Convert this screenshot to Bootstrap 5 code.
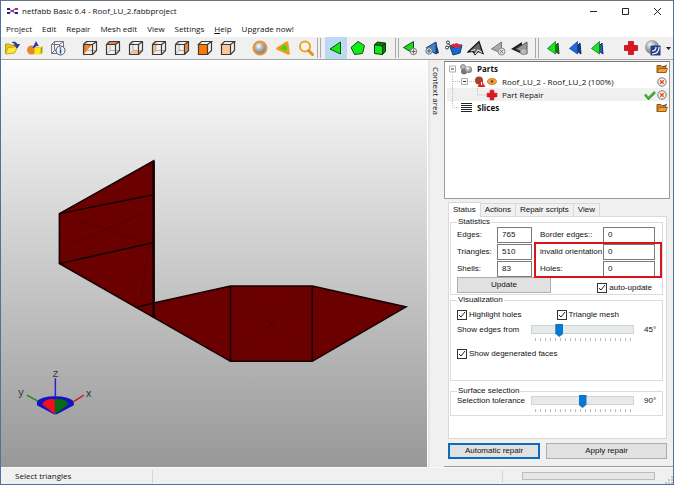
<!DOCTYPE html>
<html lang="en">
<head>
<meta charset="utf-8">
<meta name="viewport" content="width=device-width, initial-scale=1">
<title>netfabb Basic 6.4 - Roof_LU_2.fabbproject</title>
<link href="https://cdn.jsdelivr.net/npm/bootstrap@5.3.0/dist/css/bootstrap.min.css" rel="stylesheet">
<style>
  :root { --ui: "Open Sans", "Noto Sans", sans-serif; --form: "Liberation Sans", Arial, sans-serif; }
  body { font: 8px/10px var(--ui); color: #111; background: #f0f0f0; }
  button, input { font: inherit; color: inherit; }
  svg { display: block; }
  .app-window { border: 1px solid #4c72a4; border-top-color: #68727e; }
  .title-bar { height: 20px; padding-left: 6px; }
  .title-bar h1 { font-size: 8px; line-height: 10px; font-weight: 400; }
  .win-btn { width: 32px; height: 18px; }
  .flat-btn { border: 0; background: none; padding: 0; display: flex; align-items: center; justify-content: center; }
  .menu-bar { height: 16px; padding-left: 5px; gap: 10px; }
  .menu-bar a { color: #111; text-decoration: none; }
  .tool-bar { height: 23px; background: #f0f0f0; border-bottom: 1px solid #a5a5a5; }
  .tool-group { display: flex; gap: 1px; }
  .tool-group + .tool-group { margin-left: 10px; }
  .tool-btn { width: 22px; height: 22px; }
  .tool-btn.active { background: #b9dbf1; }
  .split { width: 4px; height: 20px; border: solid #a8a8a8; border-width: 0 1px; }
  .viewport { background: linear-gradient(#fdfdfd, #989898); }
  .context-strip { width: 17px; border-left: 1px solid #fff; background: #f0f0f0; box-shadow: inset 2px 0 #e6e6e6; writing-mode: vertical-rl; padding-top: 7px; }
  .side-panel { width: 229px; padding: 1px 3px 7px 0; border-bottom: 1px solid #9a9a9a; }
  .tree { height: 138px; border: 1px solid #9b9b9b; border-top-color: #777; background: #fff; margin-bottom: 3px; }
  .tree-row { height: 13px; padding: 0 1px 0 4px; }
  .tree-row.selected { background: linear-gradient(#f0f0f0, #f0f0f0) 2px 0 no-repeat; }
  .form-area { font-family: var(--form); padding: 0 3px 0 4px; }
  .tab-btn { height: 13px; padding: 0 4px; border: 1px solid #d9d9d9; border-bottom: 0; border-left-width: 0; background: #f0f0f0; line-height: 12px; }
  .tab-btn.active { height: 15px; background: #fff; margin-bottom: -1px; border-left-width: 1px; position: relative; }
  .tab-page { border: 1px solid #d9d9d9; background: #fff; padding: 0 3px 0 1px; }
  .group { border: 1px solid #dcdcdc; padding: 0 6px; margin: 0; }
  .group legend { float: none; width: auto; font-size: 8px; line-height: 10px; margin: 0; padding: 0 1px; }
  .stats { padding-bottom: 1px; }
  .visuals { padding-bottom: 21px; }
  .surfaces { margin-top: 5px; padding-bottom: 3px; }
  .stat-grid { display: grid; grid-template-columns: 40px 35px 71px 52px; row-gap: 1px; align-items: center; }
  .stat-grid label:nth-of-type(even) { padding-left: 8px; white-space: nowrap; }
  .stat-grid input { height: 16px; width: 100%; min-width: 0; border: 1px solid #7a7a7a; border-radius: 0; padding: 0 4px 2px; background: #fff; }
  .push-btn { height: 16px; border: 1px solid #adadad; background: #e1e1e1; padding: 0; line-height: 12px; }
  .push-btn.default { border: 2px solid #0a6cbd; }
  .check-row { padding: 5px 0; }
  .tick { appearance: none; width: 10px; height: 10px; margin: 0; border: 1px solid #333; background: #fff; flex: none; }
  .tick:checked { background: #fff url("data:image/svg+xml,%3Csvg xmlns='http://www.w3.org/2000/svg' viewBox='0 0 8 8'%3E%3Cpath d='M1 4l2 2 4-5' fill='none' stroke='%23222'/%3E%3C/svg%3E") center / 8px 8px no-repeat; }
  .tick-label { display: flex; align-items: center; gap: 2px; }
  .slider-box { width: 103px; }
  .slider { appearance: none; display: block; width: 100%; height: 9px; margin: 0; background: none; }
  .slider::-webkit-slider-runnable-track { height: 9px; background: #e7eaea; border: 1px solid #d0d3d3; }
  .slider::-webkit-slider-thumb { appearance: none; width: 8px; height: 13px; margin-top: -2px; background: #0a78d0; clip-path: polygon(0 0, 100% 0, 100% 75%, 50% 100%, 0 75%); }
  .ticks { height: 3px; margin: 4px 3px 0 4px; background: repeating-linear-gradient(90deg, #bbb 0 1px, transparent 1px 5px); }
  .value { width: 12px; margin-left: 10px; white-space: nowrap; }
  .callout { position: absolute; left: 83px; right: 0; top: 15px; height: 36px; border: 2px solid #d9151c; pointer-events: none; }
  .status-bar { height: 17px; padding-left: 14px; border-top: 1px solid #fafafa; }
  .status-cell { border-left: 1px solid #d5d5d5; height: 13px; }
  .load-track { width: 133px; height: 8px; border: 1px solid #bcbcbc; background: #e6e6e6; border-radius: 0; }
</style>
<script src="https://cdn.jsdelivr.net/npm/bootstrap@5.3.0/dist/js/bootstrap.bundle.min.js"></script>
</head>
<body>
<svg width="0" height="0" class="position-absolute" aria-hidden="true">
  <defs>
    <radialGradient id="ball" cx=".4" cy=".35" r=".65"><stop offset="0" stop-color="#fff"/><stop offset=".5" stop-color="#aaa"/><stop offset="1" stop-color="#777"/></radialGradient>
    <symbol id="cube" viewBox="0 0 16 16"><path d="M5 2v8.500h9M5 10.500l-3 3" fill="none" stroke="#b9aea4"/><path d="M1.500 4.500h9v10h-9zM1.500 4.500l3-3h10l-4 3M14.500 1.500v9l-4 4" fill="none" stroke="#3d3a38" stroke-width="1.200" stroke-linejoin="round"/></symbol>
    <symbol id="cross" viewBox="0 0 16 16"><path d="M5.500 1.500h5v4h4v5h-4v4h-5v-4h-4v-5h4z" fill="#e0141c" stroke="#b01018" stroke-width=".8"/></symbol>
    <symbol id="folder" viewBox="0 0 12 10"><path d="M1 1.500h4l1 1h4v6H1z" fill="#d98324" stroke="#8a5518"/><path d="M1 8.500l2-4h8.500l-2 4z" fill="#f4a13a" stroke="#8a5518" stroke-width=".8"/><path d="M7 3l4-2" stroke="#555"/></symbol>
    <symbol id="remove" viewBox="0 0 10 10"><circle cx="5" cy="5" r="4.200" fill="#fdf3ee" stroke="#555" stroke-width=".8"/><path d="M3.200 3.200l3.600 3.600M6.800 3.200L3.200 6.800" stroke="#e2521d" stroke-width="1.400"/></symbol>
  </defs>
</svg>
<div class="app-window vh-100 d-flex flex-column overflow-hidden">
  <header class="bg-white">
    <div class="title-bar d-flex align-items-center">
      <svg width="11" height="8" viewBox="0 0 11 8"><path d="M2 2l3 2 3-2M2 6l3-2 3 2" stroke="#3f51c4" fill="none"/><path d="M0 1h3v2H0zM0 5h3v2H0zM8 5h3v2H8z" fill="#25258c"/><path d="M8 1h3v2H8zM4 3h3v2H4z" fill="#c02b62"/></svg>
      <h1 class="mb-0 ms-1">netfabb Basic 6.4 - Roof_LU_2.fabbproject</h1>
      <div class="ms-auto d-flex">
        <button class="flat-btn win-btn" aria-label="Minimize"><svg width="9" height="9"><path d="M1 4.500h7" stroke="#222"/></svg></button>
        <button class="flat-btn win-btn" aria-label="Maximize"><svg width="9" height="9"><path d="M1.500 1.500h6v6h-6z" fill="none" stroke="#222"/></svg></button>
        <button class="flat-btn win-btn" aria-label="Close"><svg width="9" height="9"><path d="M1 1l7 7M8 1L1 8" stroke="#222"/></svg></button>
      </div>
    </div>
    <nav class="menu-bar d-flex align-items-center">
      <a href="#">Project</a><a href="#">Edit</a><a href="#">Repair</a><a href="#">Mesh edit</a><a href="#">View</a><a href="#">Settings</a><a href="#"><u>H</u>elp</a><a href="#">Upgrade now!</a>
    </nav>
  </header>

  <div class="tool-bar d-flex align-items-center flex-shrink-0" role="toolbar" aria-label="Tools">
    <div class="tool-group">
      <button class="flat-btn tool-btn" aria-label="Open"><svg width="16" height="16" viewBox="0 0 16 16"><path d="M1.500 14V4h4l1 1h4v3" fill="#e8c520" stroke="#b49a18"/><path d="M1.500 14L4 7.500l10-1L10.500 13z" fill="#ffea3c" stroke="#c2a81c"/><path d="M8 2.500c3-1 5 0 5 2.500M10.500 4.500h5L13 8z" fill="#2c3f8c" stroke="#2c3f8c"/></svg></button>
      <button class="flat-btn tool-btn" aria-label="Add part"><svg width="16" height="16" viewBox="0 0 16 16"><circle cx="4.500" cy="10" r="4.500" fill="#e7872b"/><path d="M9 1l4 7H5.500z" fill="#3434c8"/><path d="M7.500 7.500h6v7h-6z" fill="#ffe810"/><path d="M13.500 7.500l2-1.500v6.500l-2 2z" fill="#b59c00"/><path d="M7.500 7.500l2-1.500h6l-2 1.500z" fill="#fff27a"/></svg></button>
      <button class="flat-btn tool-btn" aria-label="Part information"><svg width="16" height="16" viewBox="0 0 16 16"><path d="M1.500 4.500h8v9h-8zM1.500 4.500l3-3h9l-4 3M13.500 1.500v6M4.500 1.500v9h5M4.500 10.500l-3 3" fill="none" stroke="#777"/><circle cx="10.500" cy="10.500" r="4.500" fill="#eef2fb" stroke="#44557c"/><path d="M10.500 7.500v1.200M10.500 9.500v4" stroke="#223a80" stroke-width="1.400"/></svg></button>
    </div>
    <div class="tool-group">
      <button class="flat-btn tool-btn" aria-label="Isometric view"><svg width="16" height="16"><path d="M1.500 4.500h9l-9 10z" fill="#f47b10"/><path d="M10.500 4.500v10h-9z" fill="#fdeee0"/><use href="#cube"/></svg></button>
      <button class="flat-btn tool-btn" aria-label="Top view"><svg width="16" height="16"><path d="M1.500 4.500l3-3h10l-4 3z" fill="#e8823c"/><use href="#cube"/></svg></button>
      <button class="flat-btn tool-btn" aria-label="Bottom view"><svg width="16" height="16"><path d="M1.500 14.500l3.500-4h9.500l-4 4z" fill="#f5c48c"/><use href="#cube"/></svg></button>
      <button class="flat-btn tool-btn" aria-label="Left view"><svg width="16" height="16"><path d="M1.500 4.500l3.500-3v9l-3.500 4z" fill="#f5bd82"/><use href="#cube"/></svg></button>
      <button class="flat-btn tool-btn" aria-label="Right view"><svg width="16" height="16"><path d="M10.500 4.500l4-3v9l-4 4z" fill="#f08a40"/><use href="#cube"/></svg></button>
      <button class="flat-btn tool-btn" aria-label="Front view"><svg width="16" height="16" viewBox="0 0 16 16"><path d="M1.500 4.500h9v10h-9z" fill="#ff7a00"/><path d="M1.500 4.500l3-3h10l-4 3zM10.500 4.500h-9v10h9zM14.500 1.500v9l-4 4" fill="none" stroke="#3d3a38" stroke-width="1.200"/></svg></button>
      <button class="flat-btn tool-btn" aria-label="Back view"><svg width="16" height="16" viewBox="0 0 16 16"><path d="M1.500 4.500h9v10h-9z" fill="#fbc79c"/><path d="M1.500 4.500l3-3h10l-4 3zM10.500 4.500h-9v10h9zM14.500 1.500v9l-4 4" fill="none" stroke="#3d3a38" stroke-width="1.200"/></svg></button>
    </div>
    <div class="tool-group">
      <button class="flat-btn tool-btn" aria-label="Shaded"><svg width="16" height="16"><circle cx="8" cy="8" r="6.500" fill="url(#ball)" stroke="#e8962e" stroke-width="2"/></svg></button>
      <button class="flat-btn tool-btn" aria-label="Zoom to selection"><svg width="16" height="16"><path d="M2.500 8.500L12 2.500l1.500 11z" fill="#14e614" stroke="#f09a22" stroke-width="2.600" stroke-linejoin="round"/></svg></button>
      <button class="flat-btn tool-btn" aria-label="Zoom"><svg width="16" height="16"><circle cx="7" cy="6.500" r="5" fill="#fdf6ea" stroke="#efa02c" stroke-width="2"/><path d="M10.500 10.500l4 4" stroke="#e58e1c" stroke-width="3" stroke-linecap="round"/></svg></button>
    </div>
    <div class="split"></div>
    <div class="d-flex ms-1">
      <button class="flat-btn tool-btn active" aria-label="Select triangles" aria-pressed="true"><svg width="16" height="16"><path d="M2 9l10.500-7v12z" fill="#12ec12" stroke="#184818"/></svg></button>
      <button class="flat-btn tool-btn" aria-label="Select surfaces"><svg width="16" height="16"><path d="M8 1.500l6.500 4-2 8-8 1-3.500-7z" fill="#0cee16" stroke="#174d17"/></svg></button>
      <button class="flat-btn tool-btn" aria-label="Select shells"><svg width="16" height="16"><path d="M2.500 4.500l8 1.500v8.500l-8-1z" fill="#0cee16" stroke="#123812"/><path d="M2.500 4.500l3-2.500 8 1-3 3zM13.500 3v8.500l-3 3V6z" fill="#087a0c" stroke="#123812"/></svg></button>
    </div>
    <div class="split ms-1"></div>
    <div class="d-flex">
      <button class="flat-btn tool-btn" aria-label="Add triangle"><svg width="16" height="16"><path d="M1.500 7.500l10-6v12z" fill="#12dc1c" stroke="#1a4a1a"/><circle cx="11.500" cy="11.500" r="3.200" fill="#e8ece8" stroke="#777"/><path d="M9.500 11.500h4M11.500 9.500v4" stroke="#666"/></svg></button>
      <button class="flat-btn tool-btn" aria-label="Add node"><svg width="16" height="16"><path d="M2 8l10-6v12z" fill="#3d83d6" stroke="#203a60"/><path d="M12 2l3 11-3 1z" fill="#153a78"/><circle cx="5" cy="11" r="3.200" fill="#dfe8f2" stroke="#677"/><path d="M3 11h4M5 9v4" stroke="#456"/></svg></button>
      <button class="flat-btn tool-btn" aria-label="Cut surface"><svg width="18" height="16"><path d="M5 7l12-2-2 8-7 2z" fill="#1668d2" stroke="#143a7a"/><path d="M5 7l6-4 6 2-5 3z" fill="#ef2030"/><path d="M1 2l8 6M1 8l8-4" stroke="#333"/><circle cx="3" cy="2.500" r="1.500" fill="#fff" stroke="#333"/><circle cx="2" cy="7.500" r="1.500" fill="#fff" stroke="#333"/></svg></button>
      <button class="flat-btn tool-btn" aria-label="Split triangles"><svg width="18" height="16"><path d="M1 12L12 1.500l4 12-5-2-3 3-2-3z" fill="#666" stroke="#111" stroke-width="1.200"/><path d="M4 11l4.500-1.500M8 14l3-4 4 2.500" fill="none" stroke="#e4e4e4" stroke-width="1.200"/></svg></button>
      <button class="flat-btn tool-btn" aria-label="Remove triangle"><svg width="16" height="16"><path d="M1.500 9l10-7v11z" fill="#aaa" stroke="#777"/><circle cx="11.500" cy="11.500" r="3.500" fill="#ddd" stroke="#888"/><path d="M10 10l3 3M13 10l-3 3" stroke="#777"/></svg></button>
      <button class="flat-btn tool-btn" aria-label="Remove double triangles"><svg width="18" height="16"><path d="M0 9l11-7v12z" fill="#222"/><path d="M5 9l11-7v12z" fill="#999" stroke="#555"/><circle cx="12.500" cy="11.500" r="3.200" fill="#bbb" stroke="#888"/></svg></button>
    </div>
    <div class="split ms-1"></div>
    <div class="d-flex ms-1">
      <button class="flat-btn tool-btn" aria-label="Flip green"><svg width="16" height="16"><path d="M6 9l6-6 1 11z" fill="#127a16" stroke="#184818"/><path d="M1.500 8.500l8-7v12.500z" fill="#17e81c" stroke="#145514" stroke-width=".7"/></svg></button>
      <button class="flat-btn tool-btn" aria-label="Flip blue"><svg width="16" height="16"><path d="M6 9l6-6 1 11z" fill="#153a88" stroke="#152c60"/><path d="M1.500 8.500l8-7v12.500z" fill="#1b6ce0" stroke="#173a80" stroke-width=".7"/></svg></button>
      <button class="flat-btn tool-btn" aria-label="Flip selection"><svg width="16" height="16"><path d="M6 9l6-6 1 11z" fill="#1b5cc8" stroke="#152c60"/><path d="M1.500 8.500l8-7v12.500z" fill="#17e81c" stroke="#145514" stroke-width=".7"/></svg></button>
    </div>
    <div class="d-flex ms-auto align-items-center">
      <button class="flat-btn tool-btn" aria-label="Repair"><svg width="16" height="16"><use href="#cross"/></svg></button>
      <button class="flat-btn tool-btn" aria-label="New analysis"><svg width="18" height="18"><circle cx="8" cy="8" r="7" fill="url(#ball)"/><path d="M6.500 6.500h10v10h-10z" fill="#243f8c"/><path d="M8 12c3 0 4-1 4-4M8 15c5 0 7-2 7-7" fill="none" stroke="#fff" stroke-width="1.200"/></svg></button>
      <button class="flat-btn" style="width:9px" aria-label="More"><svg width="5" height="3"><path d="M0 0h5L2.500 3z" fill="#222"/></svg></button>
    </div>
  </div>

  <main class="d-flex flex-grow-1 overflow-hidden">
    <section class="viewport flex-grow-1 overflow-hidden" aria-label="3D view">
      <svg class="w-100 h-100" viewBox="1 60 427 407" preserveAspectRatio="xMinYMin meet" font-family="Liberation Sans, sans-serif" font-size="11" text-anchor="middle" fill="#333">
        <g fill="#6b0000" stroke="#140000" stroke-width="1.500">
          <path d="M154 303.500L231 286.500H313L407 307.500L313 362H231L59.500 264V214L154 161z"/>
          <path d="M231 286.500V362M313 286.500V362M59.500 214L154 195M59.500 264L154 243M136 308L154 303.500" fill="none"/>
          <path d="M238 293L306 356M306 293L238 356M75 219L145 243M75 243L143 214M141 300L150 245" fill="none" stroke="#4c0000" stroke-width="1" opacity=".7"/>
          <path d="M154 161V318" stroke-width="2.500"/>
        </g>
        <path d="M37 402Q42 397 55 397T74 402V406L57 415H54L37 406z" fill="#1212c8"/>
        <path d="M42 405Q46 399 55 400V415z" fill="#f0101c"/>
        <path d="M55 400Q66 399 69 405L55 415z" fill="#056a10"/>
        <path d="M55.500 379V398" stroke="#2222d8" stroke-width="1.500"/>
        <path d="M27 396L38 402" stroke="#178a20" stroke-width="1.500"/>
        <path d="M84 396L73 403" stroke="#c4202c" stroke-width="1.500"/>
        <text x="55.500" y="378" font-size="9">Z</text><text x="21" y="397">y</text><text x="89" y="398">x</text>
      </svg>
    </section>
    <div class="context-strip d-flex align-items-center flex-shrink-0 justify-content-start"><span>Context area</span></div>
    <aside class="side-panel d-flex flex-column flex-shrink-0">
      <div class="tree" role="tree">
        <div class="tree-row d-flex align-items-center" role="treeitem">
          <svg width="24" height="13" class="me-1"><path d="M.5 4h6v6h-6z" fill="#fff" stroke="#aaa"/><path d="M2 7h3" stroke="#333"/><circle cx="14" cy="5" r="2.500" fill="#bbb" stroke="#555" stroke-width=".6"/><circle cx="15" cy="9.500" r="3" fill="#777"/><circle cx="19.500" cy="7.500" r="3.500" fill="url(#ball)"/></svg>
          <b>Parts</b><svg class="ms-auto" width="12" height="10"><use href="#folder"/></svg>
        </div>
        <div class="tree-row d-flex align-items-center" role="treeitem">
          <svg width="49" height="13" class="me-1"><path d="M3.500 0v13M4 6.500h7" stroke="#bbb" stroke-dasharray="1 1"/><path d="M12.500 3.500h6v6h-6z" fill="#fff" stroke="#aaa"/><path d="M14 6.500h3" stroke="#333"/><path d="M20 6.500h5" stroke="#bbb" stroke-dasharray="1 1"/><circle cx="30" cy="5.500" r="4" fill="#9c4636"/><path d="M32 5l4.500 7h-8z" fill="#f02020"/><path d="M32.500 7v3" stroke="#fff"/><ellipse cx="43" cy="6.500" rx="4.500" ry="3" fill="#f2a23a" stroke="#b4691a" stroke-width=".7"/><circle cx="43" cy="6.500" r="1.200" fill="#7b3b0b"/></svg>
          <span>Roof_LU_2 - Roof_LU_2 (100%)</span><svg class="ms-auto" width="12" height="10" viewBox="-1 0 12 10"><use href="#remove" width="10" height="10"/></svg>
        </div>
        <div class="tree-row selected d-flex align-items-center" role="treeitem" aria-selected="true">
          <svg width="49" height="13" class="me-1"><path d="M3.500 0v13M28.500 0v7h8" fill="none" stroke="#bbb" stroke-dasharray="1 1"/><use href="#cross" x="37" y="1" width="12" height="12"/></svg>
          <span>Part Repair</span>
          <svg class="ms-auto" width="12" height="10"><path d="M1 4.500l3.500 4L11 2" fill="none" stroke="#2f9a22" stroke-width="2.600"/><path d="M1.500 4.500l3 3.300L10.500 2" fill="none" stroke="#63d048"/></svg>
          <svg width="12" height="10" viewBox="-1 0 12 10"><use href="#remove" width="10" height="10"/></svg>
        </div>
        <div class="tree-row d-flex align-items-center" role="treeitem">
          <svg width="24" height="13" class="me-1"><path d="M3.500 0v6.500h6" fill="none" stroke="#bbb" stroke-dasharray="1 1"/><path d="M12 2.500h11M12 4.500h11M12 6.500h11M12 8.500h11M12 10.500h11" stroke="#222"/></svg>
          <b>Slices</b><svg class="ms-auto" width="12" height="10"><use href="#folder"/></svg>
        </div>
      </div>

      <div class="form-area d-flex flex-column flex-grow-1">
        <div class="d-flex align-items-end" role="tablist">
          <button class="tab-btn active" role="tab" aria-selected="true">Status</button><button class="tab-btn" role="tab">Actions</button><button class="tab-btn" role="tab">Repair scripts</button><button class="tab-btn" role="tab">View</button>
        </div>
        <div class="tab-page flex-grow-1" role="tabpanel">
          <fieldset class="group stats position-relative">
            <legend>Statistics</legend>
            <div class="stat-grid">
              <label for="edges">Edges:</label><input id="edges" value="765"><label for="border">Border edges::</label><input id="border" value="0">
              <label for="tris">Triangles:</label><input id="tris" value="510"><label for="orient">invalid orientation</label><input id="orient" value="0">
              <label for="shells">Shells:</label><input id="shells" value="83"><label for="holes">Holes:</label><input id="holes" value="0">
            </div>
            <div class="d-flex align-items-end justify-content-between pe-1">
              <button class="push-btn" style="width:94px">Update</button>
              <span class="tick-label"><input class="tick" type="checkbox" id="auto" checked><label for="auto">auto-update</label></span>
            </div>
            <div class="callout"></div>
          </fieldset>
          <fieldset class="group visuals">
            <legend>Visualization</legend>
            <div class="row g-0 check-row">
              <div class="col-6 tick-label"><input class="tick" type="checkbox" id="hl" checked><label for="hl">Highlight holes</label></div>
              <div class="col-6 tick-label"><input class="tick" type="checkbox" id="mesh" checked><label for="mesh">Triangle mesh</label></div>
            </div>
            <div class="d-flex justify-content-between">
              <label for="edgeAngle">Show edges from</label>
              <div class="d-flex"><div class="slider-box"><input class="slider" type="range" id="edgeAngle" min="0" max="180" value="45"><div class="ticks"></div></div><output class="value" for="edgeAngle">45°</output></div>
            </div>
            <div class="tick-label pt-2"><input class="tick" type="checkbox" id="degen" checked><label for="degen">Show degenerated faces</label></div>
          </fieldset>
          <fieldset class="group surfaces">
            <legend>Surface selection</legend>
            <div class="d-flex justify-content-between">
              <label for="tol">Selection tolerance</label>
              <div class="d-flex"><div class="slider-box"><input class="slider" type="range" id="tol" min="0" max="180" value="90"><div class="ticks"></div></div><output class="value" for="tol">90°</output></div>
            </div>
          </fieldset>
        </div>
        <div class="d-flex mt-1" style="gap:6px">
          <button class="push-btn default" style="width:92px">Automatic repair</button>
          <button class="push-btn flex-grow-1">Apply repair</button>
        </div>
      </div>
    </aside>
  </main>

  <footer class="status-bar d-flex align-items-center flex-shrink-0">
    <span style="width:137px">Select triangles</span>
    <span class="status-cell flex-grow-1"></span>
    <span class="status-cell" style="width:20px"></span>
    <div class="progress load-track" role="progressbar" aria-label="Progress" aria-valuenow="0"></div>
    <svg class="ms-2 align-self-end" width="10" height="10"><path d="M8 2h2v2H8zM8 5h2v2H8zM8 8h2v2H8zM5 5h2v2H5zM5 8h2v2H5zM2 8h2v2H2z" fill="#c4c4c4"/></svg>
  </footer>
</div>
</body>
</html>
